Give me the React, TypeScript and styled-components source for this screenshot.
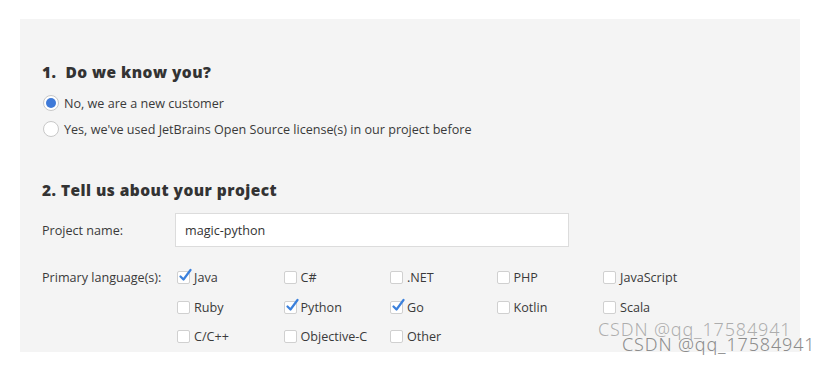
import React from 'react';
import styled, { createGlobalStyle } from 'styled-components';

const GlobalStyle = createGlobalStyle`
    html, body {
        margin: 0;
        padding: 0;
        background: #ffffff;
    }
    body {
        font-family: 'Open Sans', 'Liberation Sans', sans-serif;
        color: #3a3a3a;
    }
`;

const Page = styled.div`
    position: relative;
    width: 826px;
    height: 365px;
    padding: 19px 0 0 20px;
    box-sizing: border-box;
    overflow: hidden;
`;

const Panel = styled.div`
    width: 780px;
    height: 333px;
    background: #f4f4f4;
    padding: 43px 0 0 22px;
    box-sizing: border-box;
    overflow: hidden;
`;

const SectionTitle = styled.h2<{ $top?: number }>`
    margin: ${(p) => p.$top ?? 0}px 0 0 0;
    font-family: 'Open Sans', sans-serif;
    font-weight: 800;
    font-size: 15.5px;
    line-height: 20px;
    letter-spacing: 0.45px;
    color: #333333;
`;

const RadioList = styled.div`
    display: flex;
    flex-direction: column;
    margin-top: 8px;
`;

const RadioRow = styled.label`
    display: flex;
    align-items: center;
    gap: 5px;
    height: 26px;
    font-size: 12.6px;
    color: #3a3a3a;
`;

const RadioDot = styled.span<{ $on?: boolean }>`
    width: 16px;
    height: 16px;
    margin-left: 1px;
    border-radius: 50%;
    border: 1px solid #c8c8c8;
    background: #ffffff;
    box-sizing: border-box;
    display: flex;
    align-items: center;
    justify-content: center;
    flex: none;

    &::after {
        content: '';
        width: 10px;
        height: 10px;
        border-radius: 50%;
        background: ${(p) => (p.$on ? '#3f7ad8' : 'transparent')};
    }
`;

const FieldRow = styled.div`
    display: grid;
    grid-template-columns: 133px 394px;
    align-items: center;
    margin-top: 13px;
`;

const FieldLabel = styled.span`
    font-size: 12.6px;
    color: #3a3a3a;
`;

const TextInput = styled.div`
    height: 34px;
    background: #ffffff;
    border: 1px solid #dcdcdc;
    box-sizing: border-box;
    padding-left: 9px;
    display: flex;
    align-items: center;
    font-size: 12.6px;
    color: #333333;
`;

const LangGrid = styled.div`
    display: grid;
    grid-template-columns: 133px repeat(5, 106.5px);
    grid-auto-rows: 29.5px;
    align-items: center;
    margin-top: 16px;
`;

const LangItem = styled.label`
    display: flex;
    align-items: center;
    gap: 4px;
    margin-left: 2px;
    font-size: 12.6px;
    color: #3a3a3a;
`;

const Box = styled.span`
    position: relative;
    width: 13px;
    height: 13px;
    border: 1px solid #d0d0d0;
    border-radius: 2px;
    background: #ffffff;
    box-sizing: border-box;
    flex: none;
`;

const Tick = styled.svg`
    position: absolute;
    left: 1px;
    top: -4px;
    width: 14px;
    height: 14px;
`;

const Watermark = styled.div<{ $x: number; $y: number; $c: string }>`
    position: absolute;
    left: ${(p) => p.$x}px;
    top: ${(p) => p.$y}px;
    font-family: 'Noto Sans', 'DejaVu Sans', sans-serif;
    font-weight: 300;
    font-size: 18px;
    line-height: 18px;
    letter-spacing: 0.85px;
    color: ${(p) => p.$c};
    white-space: nowrap;
`;

const langs: [string, boolean][][] = [
    [['Java', true], ['C#', false], ['.NET', false], ['PHP', false], ['JavaScript', false]],
    [['Ruby', false], ['Python', true], ['Go', true], ['Kotlin', false], ['Scala', false]],
    [['C/C++', false], ['Objective-C', false], ['Other', false]],
];

const Check: React.FC<{ name: string; on: boolean }> = ({ name, on }) => (
    <LangItem>
        <Box>
            {on && (
                <Tick viewBox="0 0 14 14">
                    <path d="M1.5 8.5 L4.5 11.5 L11.5 2" fill="none" stroke="#3b80dc" strokeWidth="2.2" strokeLinecap="round" strokeLinejoin="round" />
                </Tick>
            )}
        </Box>
        {name}
    </LangItem>
);

export default function App() {
    return (
        <Page>
            <GlobalStyle />
            <Panel>
                <SectionTitle>1.&nbsp; Do we know you?</SectionTitle>
                <RadioList>
                    <RadioRow>
                        <RadioDot $on />
                        No, we are a new customer
                    </RadioRow>
                    <RadioRow>
                        <RadioDot />
                        Yes, we've used JetBrains Open Source license(s) in our project before
                    </RadioRow>
                </RadioList>

                <SectionTitle $top={38}>2. Tell us about your project</SectionTitle>
                <FieldRow>
                    <FieldLabel>Project name:</FieldLabel>
                    <TextInput>magic-python</TextInput>
                </FieldRow>
                <LangGrid>
                    {langs.map((row, i) => (
                        <React.Fragment key={i}>
                            <FieldLabel>{i === 0 ? 'Primary language(s):' : ''}</FieldLabel>
                            {row.map(([name, on]) => (
                                <Check key={name} name={name} on={on} />
                            ))}
                        </React.Fragment>
                    ))}
                </LangGrid>
            </Panel>
            <Watermark $x={598} $y={320} $c="rgba(150,150,150,0.75)">CSDN @qq_17584941</Watermark>
            <Watermark $x={622} $y={335} $c="#8c8c8c">CSDN @qq_17584941</Watermark>
        </Page>
    );
}
